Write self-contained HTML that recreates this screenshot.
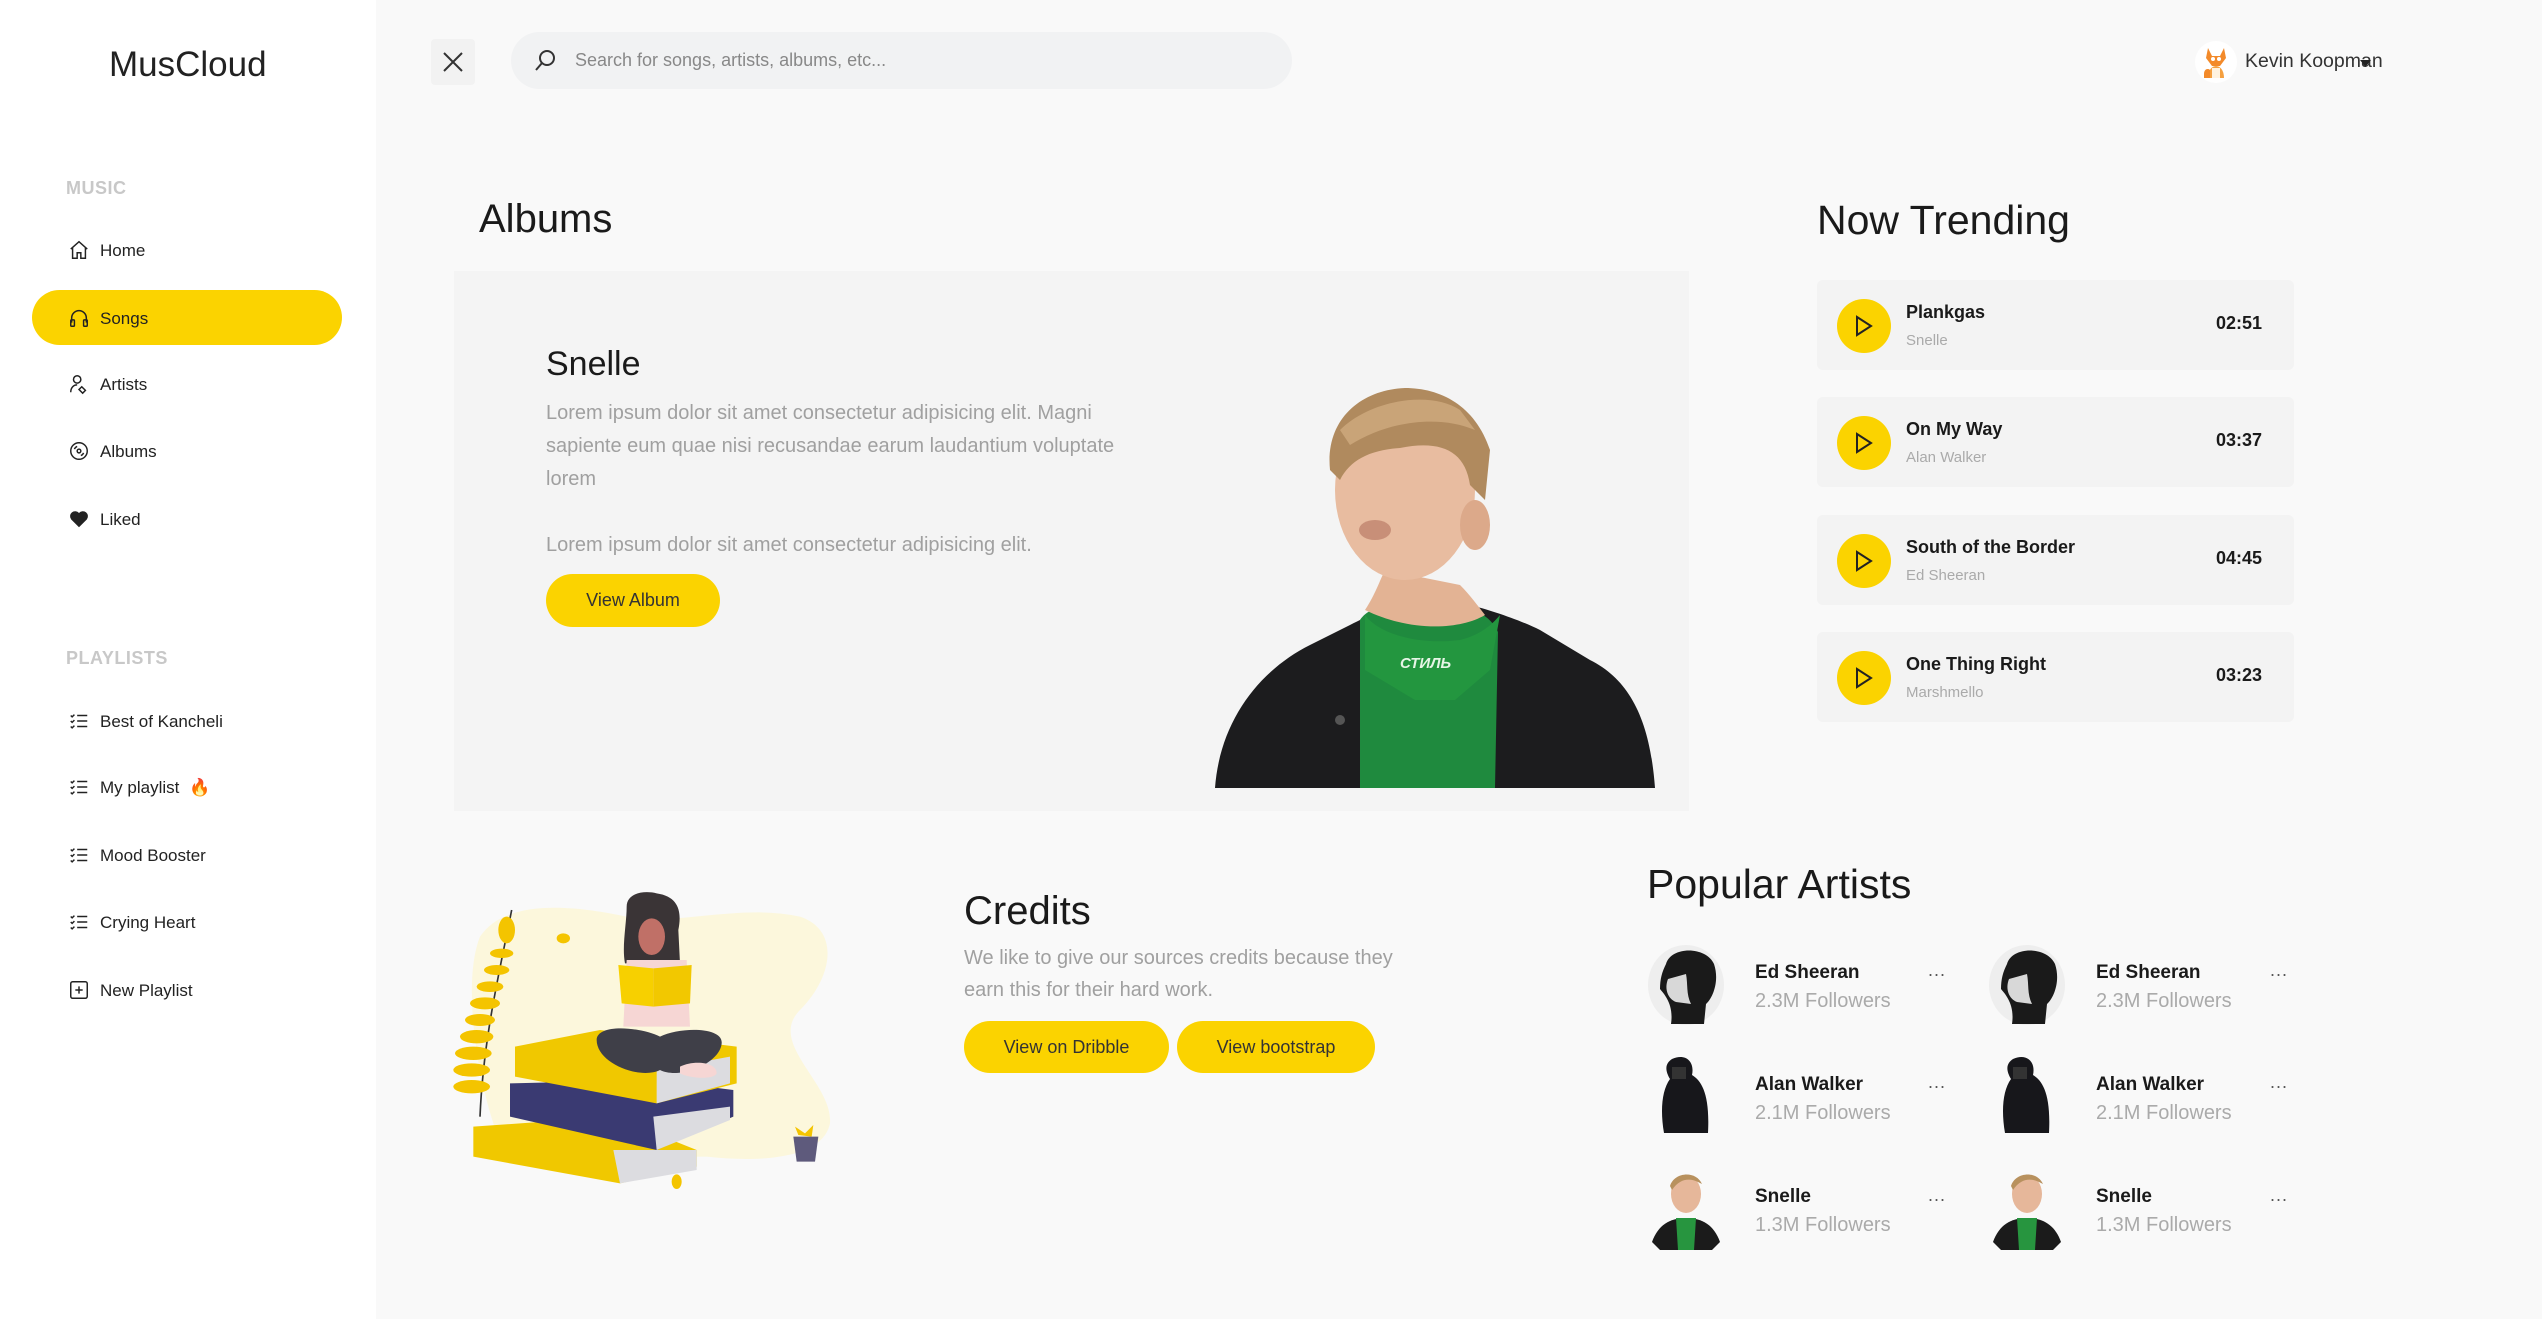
<!DOCTYPE html>
<html><head><meta charset="utf-8">
<style>
*{margin:0;padding:0;box-sizing:border-box}
body{width:2542px;height:1319px;background:#f9f9f9;font-family:"Liberation Sans",sans-serif;position:relative;overflow:hidden;color:#1a1a1a}
.a{position:absolute;white-space:nowrap}
.side{position:absolute;left:0;top:0;width:376px;height:1319px;background:#fff}
.lbl{font-size:18px;font-weight:bold;color:#c8c8c8;letter-spacing:.5px}
.nav{font-size:17px;color:#222;display:flex;align-items:center;gap:10px;line-height:1}
.nav svg{width:22px;height:22px}
.card{position:absolute;left:1817px;width:477px;height:90px;background:#f3f3f3;border-radius:6px}
.play{position:absolute;left:20px;top:19px;width:54px;height:54px;border-radius:50%;background:#fbd300}
.play svg{position:absolute;left:16px;top:15px}
.tt{position:absolute;left:89px;top:22px;font-size:18px;font-weight:bold}
.ta{position:absolute;left:89px;top:52px;font-size:15px;color:#aaa}
.tm{position:absolute;right:32px;top:33px;font-size:18px;font-weight:bold}
.btn{position:absolute;background:#fbd300;border-radius:27px;font-size:18px;color:#333;display:flex;align-items:center;justify-content:center}
.an{font-size:19px;font-weight:bold}
.af{font-size:20px;color:#aaa}
.dots{font-size:18px;color:#555;letter-spacing:1px}
p.g{color:#a0a0a0;font-size:20px;line-height:33px}
</style></head><body>
<div class="side"></div>
<div class="a" style="left:109px;top:45px;font-size:35px;color:#222">MusCloud</div>

<div class="a lbl" style="left:66px;top:178px">MUSIC</div>
<div class="a nav" style="left:68px;top:239px"><svg viewBox="0 0 24 24" fill="none" stroke="#222" stroke-width="1.6"><path d="M3 11 12 3l9 8M5 9v12h5v-6h4v6h5V9"/></svg>Home</div>
<div class="a" style="left:32px;top:290px;width:310px;height:55px;background:#fbd300;border-radius:28px"></div>
<div class="a nav" style="left:68px;top:307px"><svg viewBox="0 0 24 24" fill="none" stroke="#222" stroke-width="1.6"><path d="M4 17v-5a8 8 0 0 1 16 0v5"/><rect x="3" y="14" width="4" height="7" rx="1"/><rect x="17" y="14" width="4" height="7" rx="1"/></svg>Songs</div>
<div class="a nav" style="left:68px;top:373px"><svg viewBox="0 0 24 24" fill="none" stroke="#222" stroke-width="1.6"><circle cx="10" cy="7" r="4"/><path d="M3 21c0-5 3-8 7-8M15 15l4 4-3 3-4-4z"/></svg>Artists</div>
<div class="a nav" style="left:68px;top:440px"><svg viewBox="0 0 24 24" fill="none" stroke="#222" stroke-width="1.6"><circle cx="12" cy="12" r="9"/><circle cx="12" cy="12" r="2"/><path d="M7 10a5 5 0 0 1 3-3M17 14a5 5 0 0 1-3 3"/></svg>Albums</div>
<div class="a nav" style="left:68px;top:508px"><svg viewBox="0 0 24 24"><path fill="#222" d="M12 21 3.5 12.5A5 5 0 0 1 12 5.5a5 5 0 0 1 8.5 7z"/></svg>Liked</div>

<div class="a lbl" style="left:66px;top:648px">PLAYLISTS</div>
<div class="a nav" style="left:68px;top:710px"><svg viewBox="0 0 24 24" fill="none" stroke="#222" stroke-width="1.6"><path d="M10 6h11M10 12h11M10 18h11M3 6l1.5 1.5L7 5M3 12l1.5 1.5L7 11M3 18l1.5 1.5L7 17"/></svg>Best of Kancheli</div>
<div class="a nav" style="left:68px;top:776px"><svg viewBox="0 0 24 24" fill="none" stroke="#222" stroke-width="1.6"><path d="M10 6h11M10 12h11M10 18h11M3 6l1.5 1.5L7 5M3 12l1.5 1.5L7 11M3 18l1.5 1.5L7 17"/></svg>My playlist <span style="color:#e65a00">🔥</span></div>
<div class="a nav" style="left:68px;top:844px"><svg viewBox="0 0 24 24" fill="none" stroke="#222" stroke-width="1.6"><path d="M10 6h11M10 12h11M10 18h11M3 6l1.5 1.5L7 5M3 12l1.5 1.5L7 11M3 18l1.5 1.5L7 17"/></svg>Mood Booster</div>
<div class="a nav" style="left:68px;top:911px"><svg viewBox="0 0 24 24" fill="none" stroke="#222" stroke-width="1.6"><path d="M10 6h11M10 12h11M10 18h11M3 6l1.5 1.5L7 5M3 12l1.5 1.5L7 11M3 18l1.5 1.5L7 17"/></svg>Crying Heart</div>
<div class="a nav" style="left:68px;top:979px"><svg viewBox="0 0 24 24" fill="none" stroke="#222" stroke-width="1.6"><rect x="3" y="3" width="18" height="18" rx="2"/><path d="M12 8v8M8 12h8"/></svg>New Playlist</div>

<!-- top bar -->
<div class="a" style="left:431px;top:39px;width:44px;height:46px;background:#f2f2f2;border-radius:4px"></div>
<svg class="a" style="left:442px;top:51px" width="22" height="22" viewBox="0 0 22 22" stroke="#333" stroke-width="2"><path d="M2 2l18 18M20 2 2 20"/></svg>
<div class="a" style="left:511px;top:32px;width:781px;height:57px;background:#f1f2f3;border-radius:29px"></div>
<svg class="a" style="left:533px;top:48px" width="24" height="26" viewBox="0 0 24 26" fill="none" stroke="#333" stroke-width="2"><circle cx="14" cy="10" r="7"/><path d="M9 15 3 22"/></svg>
<div class="a" style="left:575px;top:50px;font-size:18px;color:#888">Search for songs, artists, albums, etc...</div>
<div class="a" style="left:2195px;top:41px;width:42px;height:42px;border-radius:50%;background:#fff"></div>
<svg class="a" style="left:2200px;top:44px" width="32" height="36" viewBox="0 0 32 36"><path d="M8 4l4 8h8l4-8 2 10-6 8H12L6 14z" fill="#f38a2a"/><circle cx="13" cy="15" r="2" fill="#fff"/><circle cx="19" cy="15" r="2" fill="#fff"/><path d="M8 34c0-8 4-12 8-12s8 4 8 12z" fill="#f5a040"/><path d="M4 30c0-5 4-6 6-4v8H4z" fill="#f38a2a"/><path d="M12 24h8v10h-8z" fill="#fff3e0"/></svg>
<div class="a" style="left:2245px;top:50px;font-size:19.5px;color:#333">Kevin Koopman</div>
<svg class="a" style="left:2360px;top:60px" width="11" height="7"><path d="M0 0h11L5.5 7z" fill="#222"/></svg>

<!-- albums -->
<div class="a" style="left:479px;top:197px;font-size:40px;color:#1a1a1a">Albums</div>
<div class="a" style="left:454px;top:271px;width:1235px;height:540px;background:#f4f4f4"></div>
<div class="a" style="left:546px;top:345px;font-size:34px">Snelle</div>
<p class="a g" style="left:546px;top:397px;white-space:normal;width:600px">Lorem ipsum dolor sit amet consectetur adipisicing elit. Magni sapiente eum quae nisi recusandae earum laudantium voluptate lorem</p>
<p class="a g" style="left:546px;top:529px">Lorem ipsum dolor sit amet consectetur adipisicing elit.</p>
<div class="btn" style="left:546px;top:574px;width:174px;height:53px">View Album</div>

<svg class="a" style="left:1200px;top:370px" width="480" height="430" viewBox="0 0 480 430">
<path d="M15 418 C20 350 60 300 110 275 L150 255 C170 245 180 240 190 238 L270 235 C290 240 320 250 340 260 L390 290 C430 310 450 350 455 418 Z" fill="#1c1c1e"/>
<path d="M160 250 C170 235 190 235 215 240 L250 238 C275 238 290 245 298 262 L295 418 L160 418 Z" fill="#1f8a3e"/>
<path d="M165 245 C180 265 220 275 260 270 C280 265 292 255 300 245 L290 300 L255 330 L215 330 L165 300 Z" fill="#23963f"/>
<text x="200" y="298" font-family="Liberation Sans,sans-serif" font-style="italic" font-weight="bold" font-size="15" fill="#e6f5e6">СТИЛЬ</text>
<path d="M165 240 C175 225 180 210 185 200 L260 215 C270 225 278 236 285 245 C260 260 210 262 165 240 Z" fill="#e3b394"/>
<ellipse cx="205" cy="120" rx="70" ry="90" fill="#e8bca0"/>
<ellipse cx="275" cy="155" rx="15" ry="25" fill="#dca98a"/>
<path d="M130 100 C125 50 160 20 205 18 C240 18 275 35 290 80 L285 130 L270 115 C265 80 240 70 200 78 C170 80 150 90 140 110 Z" fill="#b08a5e"/>
<path d="M140 60 C170 30 230 20 260 40 L275 60 C240 45 190 50 150 75 Z" fill="#c9a478"/>
<ellipse cx="175" cy="160" rx="16" ry="10" fill="#c88f78"/>
<circle cx="140" cy="350" r="5" fill="#555"/>
</svg>

<!-- trending -->
<div class="a" style="left:1817px;top:197px;font-size:41px;color:#1a1a1a">Now Trending</div>
<div class="card" style="top:280px"><div class="play"><svg width="22" height="24" viewBox="0 0 22 24" fill="none" stroke="#222" stroke-width="2"><path d="M4 3v18l14-9z"/></svg></div><div class="tt">Plankgas</div><div class="ta">Snelle</div><div class="tm">02:51</div></div>
<div class="card" style="top:397px"><div class="play"><svg width="22" height="24" viewBox="0 0 22 24" fill="none" stroke="#222" stroke-width="2"><path d="M4 3v18l14-9z"/></svg></div><div class="tt">On My Way</div><div class="ta">Alan Walker</div><div class="tm">03:37</div></div>
<div class="card" style="top:515px"><div class="play"><svg width="22" height="24" viewBox="0 0 22 24" fill="none" stroke="#222" stroke-width="2"><path d="M4 3v18l14-9z"/></svg></div><div class="tt">South of the Border</div><div class="ta">Ed Sheeran</div><div class="tm">04:45</div></div>
<div class="card" style="top:632px"><div class="play"><svg width="22" height="24" viewBox="0 0 22 24" fill="none" stroke="#222" stroke-width="2"><path d="M4 3v18l14-9z"/></svg></div><div class="tt">One Thing Right</div><div class="ta">Marshmello</div><div class="tm">03:23</div></div>

<!-- illustration -->
<svg class="a" style="left:440px;top:870px" width="420" height="340" viewBox="0 0 1260 1020">
<path d="M120 200 C200 80 420 110 560 140 C700 170 900 100 1080 140 C1200 180 1180 320 1080 420 C980 520 1180 640 1170 760 C1150 860 980 880 800 860 L200 860 C120 700 60 350 120 200Z" fill="#fcf7dc"/>
<path d="M120 740 C130 500 180 300 215 120" stroke="#333" stroke-width="5" fill="none"/>
<g fill="#f4c400">
<ellipse cx="95" cy="650" rx="55" ry="20"/><ellipse cx="95" cy="600" rx="55" ry="20"/><ellipse cx="100" cy="550" rx="55" ry="20"/><ellipse cx="110" cy="500" rx="50" ry="20"/><ellipse cx="120" cy="450" rx="45" ry="18"/><ellipse cx="135" cy="400" rx="45" ry="18"/><ellipse cx="150" cy="350" rx="40" ry="16"/><ellipse cx="170" cy="300" rx="38" ry="15"/><ellipse cx="185" cy="250" rx="35" ry="14"/><ellipse cx="200" cy="180" rx="25" ry="40"/>
<ellipse cx="370" cy="205" rx="20" ry="15"/><ellipse cx="710" cy="935" rx="15" ry="22"/>
</g>
<path d="M100 770 L520 740 L770 840 L770 890 L540 940 L100 860 Z" fill="#f0c800"/>
<path d="M520 840 L770 840 L770 900 L540 940Z" fill="#dcdce0"/>
<path d="M210 640 L640 630 L880 660 L880 740 L650 840 L210 740 Z" fill="#3a3a72"/>
<path d="M640 740 L870 710 L870 750 L650 840Z" fill="#dcdce0"/>
<path d="M225 530 L480 480 L890 530 L890 640 L650 700 L225 620 Z" fill="#f0c800"/>
<path d="M650 600 L870 560 L870 640 L650 700Z" fill="#dcdce0"/>
<path d="M560 110 C560 70 610 60 650 70 C720 80 725 130 715 180 L720 280 L555 280 C545 230 560 160 560 110Z" fill="#3a3436"/>
<ellipse cx="635" cy="200" rx="40" ry="55" fill="#c07067"/>
<path d="M560 270 L740 270 L750 470 L550 470Z" fill="#f6d6d4"/>
<path d="M535 285 L640 295 L640 410 L545 400Z" fill="#f7d000"/><path d="M640 295 L755 285 L750 400 L640 410Z" fill="#f2c800"/>
<path d="M470 510 C470 460 600 470 660 500 C720 470 850 470 845 520 C840 580 720 630 660 600 C600 630 470 580 470 510Z" fill="#3f3f48"/>
<path d="M720 590 C760 570 830 575 830 610 C820 630 750 625 720 610Z" fill="#f6d6d4"/>
<path d="M1060 800 L1135 800 L1125 875 L1070 875Z" fill="#5e5a7c"/><path d="M1075 795 L1065 770 L1095 790 L1120 765 L1115 800Z" fill="#f4c400"/>
</svg>

<!-- credits -->
<div class="a" style="left:964px;top:889px;font-size:40px;color:#1a1a1a">Credits</div>
<p class="a g" style="left:964px;top:942px;white-space:normal;width:462px;line-height:32px">We like to give our sources credits because they earn this for their hard work.</p>
<div class="btn" style="left:964px;top:1021px;width:205px;height:52px">View on Dribble</div>
<div class="btn" style="left:1177px;top:1021px;width:198px;height:52px">View bootstrap</div>

<!-- popular artists -->
<div class="a" style="left:1647px;top:861px;font-size:41px;color:#1a1a1a">Popular Artists</div>

<!-- column 1 -->
<svg class="a" style="left:1646px;top:944px" width="80" height="82" viewBox="0 0 80 82"><ellipse cx="40" cy="41" rx="38" ry="40" fill="#eee"/><path d="M20 20 C25 2 60 2 68 20 C74 38 66 55 60 60 L58 80 L25 80 C28 60 18 50 14 45 C14 35 16 28 20 20Z" fill="#1a1a1a"/><path d="M22 35 C18 45 22 55 30 58 L45 60 C40 50 42 40 40 30Z" fill="#d8d8d8"/></svg>
<div class="a an" style="left:1755px;top:962px">Ed Sheeran</div><div class="a af" style="left:1755px;top:990px">2.3M Followers</div><div class="a dots" style="left:1928px;top:960px">...</div>
<svg class="a" style="left:1650px;top:1055px" width="72" height="80" viewBox="0 0 72 80"><path d="M22 4 C35 -2 45 6 42 20 C52 26 60 40 58 78 L14 78 C10 55 12 35 20 24 C14 14 16 8 22 4Z" fill="#17171b"/><path d="M22 12h14v12H22z" fill="#333"/></svg>
<div class="a an" style="left:1755px;top:1074px">Alan Walker</div><div class="a af" style="left:1755px;top:1102px">2.1M Followers</div><div class="a dots" style="left:1928px;top:1072px">...</div>
<svg class="a" style="left:1650px;top:1170px" width="72" height="80" viewBox="0 0 72 80"><path d="M2 72 C8 55 20 48 36 48 C52 48 64 55 70 72 L62 80 L10 80Z" fill="#1b1b1b"/><path d="M26 48h20l-2 32H28z" fill="#27953f"/><ellipse cx="36" cy="24" rx="15" ry="19" fill="#e6b79a"/><path d="M20 16 C24 2 46 0 52 14 L48 12 C40 8 30 8 22 20Z" fill="#b8915e"/></svg>
<div class="a an" style="left:1755px;top:1186px">Snelle</div><div class="a af" style="left:1755px;top:1214px">1.3M Followers</div><div class="a dots" style="left:1928px;top:1185px">...</div>
<!-- column 2 -->
<svg class="a" style="left:1987px;top:944px" width="80" height="82" viewBox="0 0 80 82"><ellipse cx="40" cy="41" rx="38" ry="40" fill="#eee"/><path d="M20 20 C25 2 60 2 68 20 C74 38 66 55 60 60 L58 80 L25 80 C28 60 18 50 14 45 C14 35 16 28 20 20Z" fill="#1a1a1a"/><path d="M22 35 C18 45 22 55 30 58 L45 60 C40 50 42 40 40 30Z" fill="#d8d8d8"/></svg>
<div class="a an" style="left:2096px;top:962px">Ed Sheeran</div><div class="a af" style="left:2096px;top:990px">2.3M Followers</div><div class="a dots" style="left:2270px;top:960px">...</div>
<svg class="a" style="left:1991px;top:1055px" width="72" height="80" viewBox="0 0 72 80"><path d="M22 4 C35 -2 45 6 42 20 C52 26 60 40 58 78 L14 78 C10 55 12 35 20 24 C14 14 16 8 22 4Z" fill="#17171b"/><path d="M22 12h14v12H22z" fill="#333"/></svg>
<div class="a an" style="left:2096px;top:1074px">Alan Walker</div><div class="a af" style="left:2096px;top:1102px">2.1M Followers</div><div class="a dots" style="left:2270px;top:1072px">...</div>
<svg class="a" style="left:1991px;top:1170px" width="72" height="80" viewBox="0 0 72 80"><path d="M2 72 C8 55 20 48 36 48 C52 48 64 55 70 72 L62 80 L10 80Z" fill="#1b1b1b"/><path d="M26 48h20l-2 32H28z" fill="#27953f"/><ellipse cx="36" cy="24" rx="15" ry="19" fill="#e6b79a"/><path d="M20 16 C24 2 46 0 52 14 L48 12 C40 8 30 8 22 20Z" fill="#b8915e"/></svg>
<div class="a an" style="left:2096px;top:1186px">Snelle</div><div class="a af" style="left:2096px;top:1214px">1.3M Followers</div><div class="a dots" style="left:2270px;top:1185px">...</div>
</body></html>
